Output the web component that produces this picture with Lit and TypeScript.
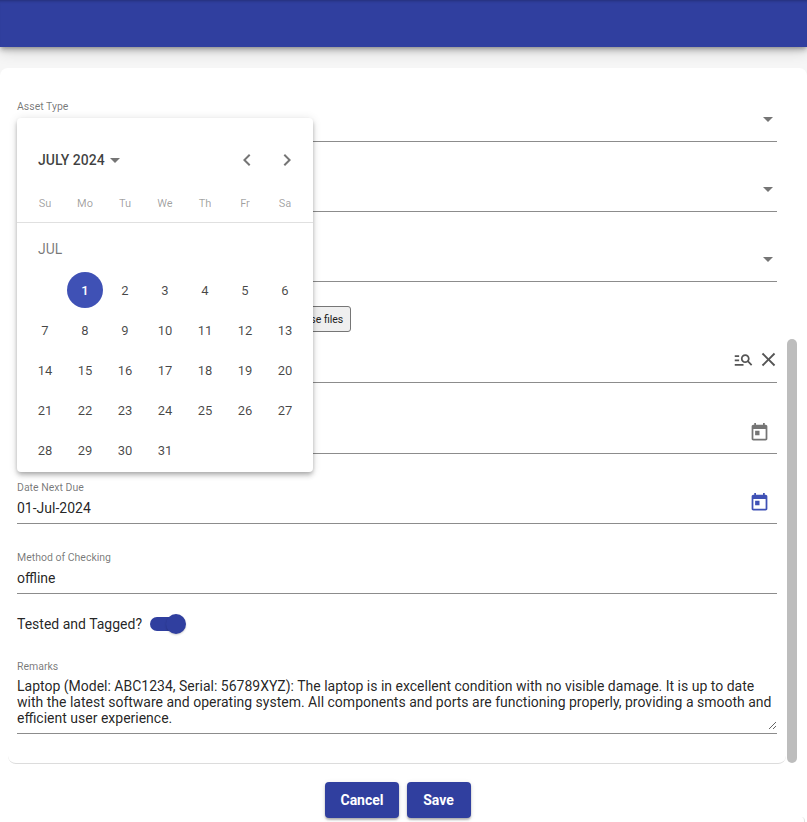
import { LitElement, html, css, svg } from "lit";
import { customElement } from "lit/decorators.js";

const ICONS = {
  today: svg`<path d="M19 3h-1V1h-2v2H8V1H6v2H5c-1.11 0-1.99.9-1.99 2L3 19c0 1.1.89 2 2 2h14c1.1 0 2-.9 2-2V5c0-1.1-.9-2-2-2zm0 16H5V8h14v11zM7 10h5v5H7z"/>`,
  search: svg`<path d="M7 9H2V7h5v2zm0 3H2v2h5v-2zm13.59 7l-3.83-3.83c-.8.52-1.74.83-2.76.83-2.76 0-5-2.24-5-5s2.24-5 5-5 5 2.24 5 5c0 1.02-.31 1.96-.83 2.75L22 17.59 20.59 19zM17 11c0-1.65-1.35-3-3-3s-3 1.35-3 3 1.35 3 3 3 3-1.35 3-3zM2 19h10v-2H2v2z"/>`,
  close: svg`<path d="M19 6.41L17.59 5 12 10.59 6.41 5 5 6.41 10.59 12 5 17.59 6.41 19 12 13.41 17.59 19 19 17.59 13.41 12z"/>`,
  prev: svg`<path d="M15.41 7.41L14 6l-6 6 6 6 1.41-1.41L10.83 12z"/>`,
  next: svg`<path d="M8.59 16.59L10 18l6-6-6-6-1.41 1.41L13.17 12z"/>`,
};

const icon = (name: keyof typeof ICONS, size: number, cls = "") =>
  html`<svg class="icon ${cls}" width=${size} height=${size} viewBox="0 0 24 24" fill="currentColor" aria-hidden="true">${ICONS[name]}</svg>`;

@customElement("app-root")
export class AppRoot extends LitElement {
  static styles = css`
    :host {
      display: block;
      width: 807px;
      height: 822px;
      position: relative;
      overflow: hidden;
      background: #fff;
      font-family: Roboto, "Liberation Sans", sans-serif;
      color: rgba(0, 0, 0, 0.87);
      font-size: 14px;
    }
    * { box-sizing: border-box; }
    .icon { display: block; flex: none; }
    .topbar {
      height: 47px;
      background: #303f9f;
      position: relative;
      z-index: 2;
      box-shadow: inset 0 3px 3px -2px rgba(0, 0, 0, 0.25),
        0 2px 4px -1px rgba(0, 0, 0, 0.25), 0 4px 5px 0 rgba(0, 0, 0, 0.14), 0 4px 14px 0 rgba(0, 0, 0, 0.16);
    }
    .body { background: #f6f6f6; padding-top: 21px; }
    .card {
      background: #fff;
      border-radius: 8px 8px 0 0;
      height: 696px;
      padding: 0 30px 0 17px;
    }
    .field {
      display: flex;
      flex-direction: column;
      justify-content: flex-end;
      border-bottom: 1px solid #8c8c8c;
      height: 70px;
      position: relative;
    }
    .field.first { height: 74px; }
    .field.search { height: 51px; }
    .field.date1 { height: 71px; }
    .label { font-size: 10.5px; line-height: 12px; color: rgba(0, 0, 0, 0.54); margin-bottom: 6px; }
    .first .label { margin-bottom: 1px; }
    .value { height: 23px; line-height: 16px; display: flex; align-items: flex-start; justify-content: flex-end; }
    .value .text { flex: 1; }
    .arrow {
      width: 0; height: 0;
      border-left: 5px solid transparent;
      border-right: 5px solid transparent;
      border-top: 5px solid #757575;
    }
    .select .value { padding: 3px 4px 0 0; height: 27px; }
    .filerow { height: 50px; padding: 24px 0 0 261px; }
    .filebtn {
      display: block;
      width: 73px;
      height: 26px;
      background: #efefef;
      border: 1px solid #767676;
      border-radius: 3px;
      font: 10.5px Roboto, sans-serif;
      color: #212121;
      padding: 0;
      text-align: center;
    }
    .actions { display: flex; gap: 3px; align-items: center; color: #555; margin: -11px -3px 0 0; }
    .dateicon { color: #757575; margin: -8px 7px 0 0; }
    .dateicon.on { color: #3f51b5; }
    .switchrow { height: 60px; display: flex; align-items: center; gap: 8px; }
    .track { width: 32px; height: 14px; border-radius: 7px; background: #303f9f; position: relative; }
    .thumb {
      position: absolute; left: 16px; top: -3px;
      width: 20px; height: 20px; border-radius: 50%;
      background: #303f9f;
      box-shadow: 0 1px 2px rgba(0,0,0,.2);
    }
    .remarks { height: 80px; padding-top: 7px; border-bottom: 1px solid #8c8c8c; }
    .remarks .label { margin: 0; display: block; }
    textarea {
      display: block;
      width: 100%;
      height: 51px;
      margin-top: 6px;
      padding: 0;
      border: none;
      outline: none;
      resize: vertical;
      font: 14px/1.125 Roboto, sans-serif;
      color: rgba(0, 0, 0, 0.87);
      background: transparent;
      overflow: hidden;
    }
    .foot {
      height: 30px;
      margin: 0 -9px;
      border-bottom: 1px solid #dcdcdc;
      border-radius: 0 0 8px 8px;
    }
    .buttons { display: flex; justify-content: center; gap: 8px; padding: 18px 11px 0 0; }
    .btn {
      height: 36px;
      min-width: 64px;
      border: none;
      border-radius: 4px;
      background: #303f9f;
      color: #fff;
      font: 700 14px Roboto, sans-serif;
      padding: 0 15px;
      box-shadow: 0 2px 3px -1px rgba(0,0,0,.2), 0 2px 2px 0 rgba(0,0,0,.14), 0 1px 5px 0 rgba(0,0,0,.12);
    }
    .scrollbar {
      position: absolute; left: 787px; top: 339px;
      width: 10px; height: 424px;
      background: #bdbdbd; border-radius: 5px;
      z-index: 3;
    }
    .corner {
      position: absolute; right: 2px; bottom: 0;
      width: 4px; height: 5px;
      border-right: 1px solid #e2e2e2;
      border-radius: 0 4px 0 0;
    }
    .picker {
      position: absolute; left: 17px; top: 118px;
      width: 296px; height: 354px;
      background: #fff; border-radius: 4px;
      padding: 0 8px;
      z-index: 4;
      box-shadow: 0 2px 4px -1px rgba(0,0,0,.2), 0 4px 5px 0 rgba(0,0,0,.14), 0 1px 10px 0 rgba(0,0,0,.12);
    }
    .pick-head { display: flex; align-items: center; height: 84px; padding: 0 6px 0 13px; margin-bottom: -17px; }
    .period { font-size: 14px; font-weight: 500; color: rgba(0,0,0,.75); display: flex; align-items: center; gap: 5px; flex: 1; }
    .period .arrow { margin-top: 1px; }
    .nav { color: #757575; display: flex; gap: 16px; }
    .weekdays { display: grid; grid-template-columns: repeat(7, 40px); height: 37px; align-items: center; }
    .weekdays span { text-align: center; font-size: 11px; color: rgba(0,0,0,.38); }
    .divider { height: 1px; background: #e0e0e0; margin: 0 -8px; }
    .monthlabel { height: 47px; display: flex; align-items: center; padding: 4px 0 0 13px; font-size: 14px; color: rgba(0,0,0,.54); }
    .days { display: grid; grid-template-columns: repeat(7, 40px); grid-auto-rows: 40px; }
    .day { display: flex; align-items: center; justify-content: center; font-size: 13px; color: rgba(0,0,0,.72); }
    .day.sel { grid-column: 2; }
    .day.sel span { width: 36px; height: 36px; border-radius: 50%; background: #3f51b5; color: #fff; display: flex; align-items: center; justify-content: center; font-weight: 500; }
  `;

  render() {
    const days = Array.from({ length: 30 }, (_, i) => i + 2);
    return html`
      <div class="topbar"></div>
      <div class="body">
        <div class="card">
          <div class="field select first">
            <div class="label">Asset Type</div>
            <div class="value"><span class="arrow"></span></div>
          </div>
          <div class="field select"><div class="value"><span class="arrow"></span></div></div>
          <div class="field select"><div class="value"><span class="arrow"></span></div></div>
          <div class="filerow"><button class="filebtn">Choose files</button></div>
          <div class="field search">
            <div class="value"><span class="actions">${icon("search", 21)}${icon("close", 23)}</span></div>
          </div>
          <div class="field date1">
            <div class="value">${icon("today", 21, "dateicon")}</div>
          </div>
          <div class="field">
            <div class="label">Date Next Due</div>
            <div class="value"><span class="text">01-Jul-2024</span>${icon("today", 21, "dateicon on")}</div>
          </div>
          <div class="field">
            <div class="label">Method of Checking</div>
            <div class="value"><span class="text">offline</span></div>
          </div>
          <div class="switchrow">
            <span>Tested and Tagged?</span>
            <span class="track"><span class="thumb"></span></span>
          </div>
          <div class="remarks">
            <span class="label">Remarks</span>
            <textarea>Laptop (Model: ABC1234, Serial: 56789XYZ): The laptop is in excellent condition with no visible damage. It is up to date with the latest software and operating system. All components and ports are functioning properly, providing a smooth and efficient user experience.</textarea>
          </div>
          <div class="foot"></div>
        </div>
      </div>
      <div class="buttons">
        <button class="btn">Cancel</button>
        <button class="btn">Save</button>
      </div>
      <div class="corner"></div>
      <div class="scrollbar"></div>
      <div class="picker">
        <div class="pick-head">
          <span class="period">JULY 2024 <span class="arrow"></span></span>
          <span class="nav">${icon("prev", 24)}${icon("next", 24)}</span>
        </div>
        <div class="weekdays">
          ${["Su", "Mo", "Tu", "We", "Th", "Fr", "Sa"].map((d) => html`<span>${d}</span>`)}
        </div>
        <div class="divider"></div>
        <div class="monthlabel">JUL</div>
        <div class="days">
          <div class="day sel"><span>1</span></div>
          ${days.map((d) => html`<div class="day">${d}</div>`)}
        </div>
      </div>
    `;
  }
}
